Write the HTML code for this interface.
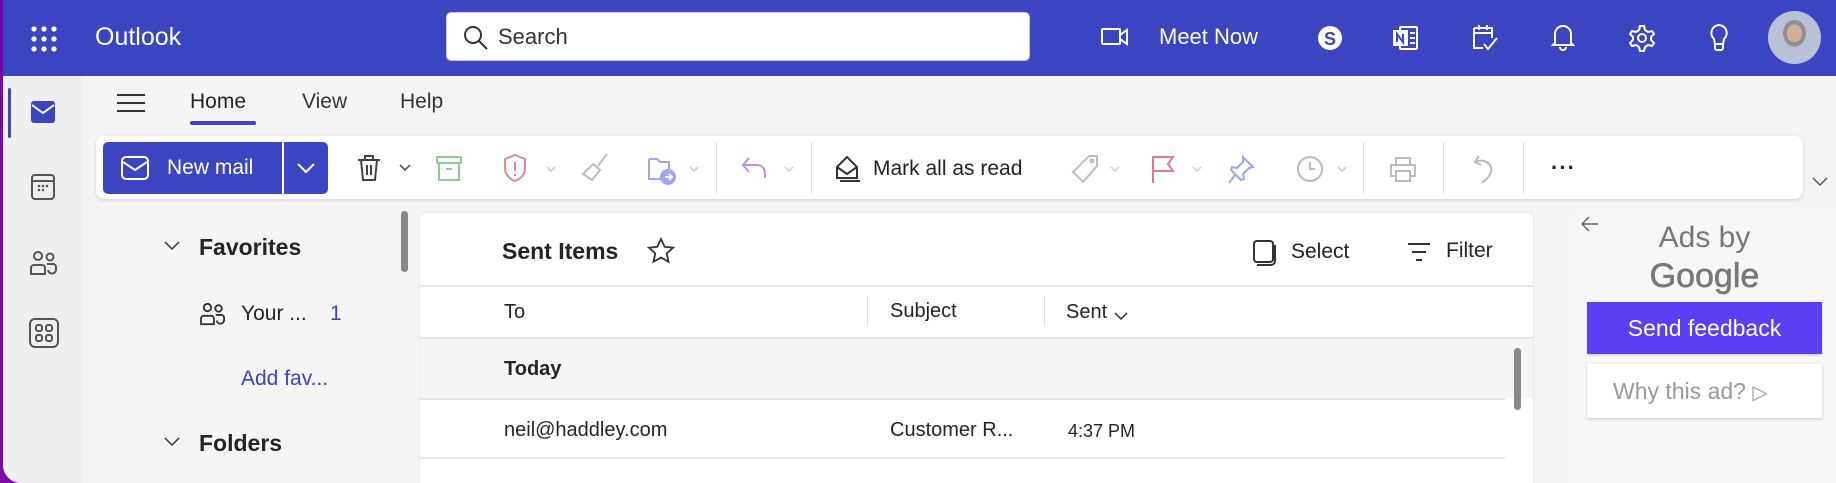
<!DOCTYPE html>
<html><head><meta charset="utf-8"><style>
*{margin:0;padding:0;box-sizing:border-box}
body{width:1836px;height:483px;overflow:hidden;background:#7a0aa8;font-family:"Liberation Sans",sans-serif;position:relative}
.a{position:absolute}
#win{position:absolute;left:3px;top:0;right:0;bottom:0;background:#f5f5f5;border-bottom-left-radius:18px;overflow:hidden}
#hdr{position:absolute;left:0;top:0;width:100%;height:76px;background:#3b44c1}
.w{color:#fff}
svg{display:block}
.t{color:#242424}
.ic{position:absolute}
</style></head><body>
<div id="win">
<div id="hdr">
 <svg class="ic" style="left:28px;top:26px" width="26" height="26" viewBox="0 0 26 26" fill="#fff"><circle cx="3" cy="3" r="2.6"/><circle cx="13" cy="3" r="2.6"/><circle cx="23" cy="3" r="2.6"/><circle cx="3" cy="13" r="2.6"/><circle cx="13" cy="13" r="2.6"/><circle cx="23" cy="13" r="2.6"/><circle cx="3" cy="23" r="2.6"/><circle cx="13" cy="23" r="2.6"/><circle cx="23" cy="23" r="2.6"/></svg>
 <div class="a w" style="left:92px;top:23px;font-size:25px">Outlook</div>
 <div class="a" style="left:443px;top:12px;width:584px;height:49px;background:#fff;border-radius:5px;border:1px solid #c8c8d8"></div>
 <svg class="ic" style="left:460px;top:25px" width="26" height="26" viewBox="0 0 26 26" fill="none" stroke="#333" stroke-width="2"><circle cx="10" cy="10" r="8"/><path d="M16 16l8 8"/></svg>
 <div class="a" style="left:495px;top:24px;font-size:22px;color:#333">Search</div>
 <svg class="ic" style="left:1098px;top:26px" width="28" height="22" viewBox="0 0 28 22" fill="none" stroke="#fff" stroke-width="2"><rect x="1" y="3" width="18" height="15" rx="1"/><path d="M19 9l7-5v14l-7-5"/></svg>
 <div class="a w" style="left:1156px;top:24px;font-size:22px">Meet Now</div>
 <svg class="ic" style="left:1314px;top:24px" width="26" height="28" viewBox="0 0 26 28"><circle cx="13" cy="14" r="12" fill="#fff"/><text x="13" y="21" text-anchor="middle" font-family="Liberation Sans" font-weight="bold" font-size="18" fill="#3b44c1">S</text></svg>
 <svg class="ic" style="left:1390px;top:25px" width="26" height="26" viewBox="0 0 26 26" fill="none" stroke="#fff" stroke-width="2"><rect x="7" y="2" width="17" height="22" rx="1"/><rect x="1" y="6" width="13" height="14" fill="#fff"/><path d="M4 17V9l6 8V9" stroke="#3b44c1"/><path d="M17 8h5M17 13h5M17 18h5"/></svg>
 <svg class="ic" style="left:1468px;top:23px" width="28" height="30" viewBox="0 0 28 30" fill="none" stroke="#fff" stroke-width="2"><path d="M3 5h18v10M3 5v20h9M3 10h18M8 2v5M16 2v5M13 21l4 5 9-11"/></svg>
 <svg class="ic" style="left:1548px;top:22px" width="24" height="30" viewBox="0 0 24 30" fill="none" stroke="#fff" stroke-width="2"><path d="M4 21V12a8 8 0 0116 0v9l2 2H2z"/><path d="M9 25a3 3 0 006 0"/></svg>
 <svg class="ic" style="left:1625px;top:24px" width="28" height="28" viewBox="0 0 28 28" fill="none" stroke="#fff" stroke-width="2"><circle cx="14" cy="14" r="4"/><path d="M12 2h4l1 4 3 2 4-1 2 3-3 3v3l3 3-2 3-4-1-3 2-1 4h-4l-1-4-3-2-4 1-2-3 3-3v-3l-3-3 2-3 4 1 3-2z"/></svg>
 <svg class="ic" style="left:1705px;top:23px" width="22" height="30" viewBox="0 0 22 30" fill="none" stroke="#fff" stroke-width="2"><path d="M11 2a8 8 0 00-5 14l1 5h8l1-5a8 8 0 00-5-14zM7 21v4a2 2 0 002 2h4a2 2 0 002-2v-4"/></svg>
 <div class="a" style="left:1765px;top:11px;width:53px;height:53px;border-radius:50%;background:radial-gradient(ellipse at 50% 42%,#d4ad98 0 20%,#8f8f8f 21% 30%,#b9c0d6 31% 100%)"></div>
</div>
<!-- rail -->
<div class="a" style="left:0;top:76px;width:79px;bottom:0;background:#efefef"></div>
<div class="a" style="left:5px;top:88px;width:3px;height:50px;background:#3b44c1;border-radius:2px"></div>
<svg class="ic" style="left:27px;top:100px" width="26" height="24" viewBox="0 0 26 24"><rect x="1" y="1" width="24" height="22" rx="3" fill="#3b44c1"/><path d="M2 5l11 8 11-8" fill="none" stroke="#fff" stroke-width="2"/></svg>
<svg class="ic" style="left:28px;top:174px" width="24" height="26" viewBox="0 0 24 26" fill="none" stroke="#555" stroke-width="2"><rect x="1" y="1" width="22" height="24" rx="3"/><path d="M1 7h22"/><g fill="#555" stroke="none"><circle cx="8" cy="12" r="1.3"/><circle cx="12" cy="12" r="1.3"/><circle cx="16" cy="12" r="1.3"/><circle cx="8" cy="16" r="1.3"/><circle cx="12" cy="16" r="1.3"/></g></svg>
<svg class="ic" style="left:27px;top:250px" width="28" height="26" viewBox="0 0 28 26" fill="none" stroke="#555" stroke-width="2"><circle cx="8" cy="6" r="4"/><circle cx="20" cy="7" r="3.5"/><path d="M1 24v-6a3 3 0 013-3h8a3 3 0 013 3v6H1zM17 14h6a3 3 0 013 3v2a4 4 0 01-8 1"/></svg>
<svg class="ic" style="left:26px;top:318px" width="30" height="30" viewBox="0 0 30 30" fill="none" stroke="#555" stroke-width="2"><rect x="1" y="1" width="28" height="28" rx="5"/><rect x="7" y="7" width="6" height="6" rx="2"/><rect x="17" y="7" width="6" height="6" rx="2"/><rect x="7" y="17" width="6" height="6" rx="2"/><rect x="17" y="17" width="6" height="6" rx="2"/></svg>
<!-- tabs -->
<svg class="ic" style="left:114px;top:93px" width="28" height="20" viewBox="0 0 28 20" stroke="#333" stroke-width="2"><path d="M0 2h28M0 10h28M0 18h28"/></svg>
<div class="a t" style="left:187px;top:90px;font-size:21px">Home</div>
<div class="a" style="left:187px;top:121px;width:66px;height:4px;background:#3b44c1;border-radius:2px"></div>
<div class="a t" style="left:299px;top:90px;font-size:21px;color:#333">View</div>
<div class="a t" style="left:397px;top:90px;font-size:21px;color:#333">Help</div>
<!-- toolbar -->
<div class="a" style="left:93px;top:136px;width:1707px;height:63px;background:#fff;border-radius:8px;box-shadow:0 1px 3px rgba(0,0,0,.15)"></div>
<div class="a" style="left:100px;top:142px;width:225px;height:52px;background:#3b44c1;border-radius:5px"></div>
<div class="a" style="left:279px;top:142px;width:2px;height:52px;background:#fff"></div>
<svg class="ic" style="left:118px;top:156px" width="28" height="24" viewBox="0 0 28 24" fill="none" stroke="#fff" stroke-width="2"><rect x="1" y="1" width="26" height="22" rx="4"/><path d="M2 6l12 8 12-8"/></svg>
<div class="a w" style="left:164px;top:156px;font-size:21px">New mail</div>
<svg class="ic" style="left:294px;top:163px" width="18" height="10" viewBox="0 0 18 10" fill="none" stroke="#fff" stroke-width="2"><path d="M1 1l8 8 8-8"/></svg>
<svg class="ic" style="left:354px;top:154px" width="24" height="28" viewBox="0 0 24 28" fill="none" stroke="#444" stroke-width="2"><path d="M1 6h22M8 6V2h8v4M4 6l2 20h12l2-20M10 11v10M14 11v10"/></svg>
<svg class="ic" style="left:396px;top:164px" width="12" height="8" viewBox="0 0 12 8" fill="none" stroke="#444" stroke-width="1.5"><path d="M1 1l5 5 5-5"/></svg>
<svg class="ic" style="left:433px;top:156px" width="26" height="25" viewBox="0 0 26 25" fill="none" stroke="#8bcb8b" stroke-width="2"><rect x="1" y="1" width="24" height="6" rx="1"/><path d="M3 7v17h20V7M10 13h6"/></svg>
<svg class="ic" style="left:500px;top:154px" width="24" height="28" viewBox="0 0 24 28" fill="none" stroke="#e08a8a" stroke-width="2"><path d="M12 1l10 4v9c0 7-5 11-10 13C7 25 2 21 2 14V5z"/><path d="M12 8v9M12 20v2"/></svg>
<svg class="ic" style="left:543px;top:166px" width="10" height="6" viewBox="0 0 10 6" fill="none" stroke="#ccc" stroke-width="1.5"><path d="M1 1l4 4 4-4"/></svg>
<svg class="ic" style="left:578px;top:152px" width="28" height="30" viewBox="0 0 28 30" fill="none" stroke="#bbb" stroke-width="2"><path d="M26 2l-9 12M12 12l7 6-8 10-9-6z"/></svg>
<svg class="ic" style="left:644px;top:155px" width="30" height="30" viewBox="0 0 30 30" fill="none" stroke="#9ea6ee" stroke-width="2"><path d="M2 4h8l3 3h9v7M2 4v20h12"/><circle cx="21" cy="22" r="7" fill="#9ea6ee"/><path d="M18 22h6M22 19l3 3-3 3" stroke="#fff"/></svg>
<svg class="ic" style="left:686px;top:166px" width="10" height="6" viewBox="0 0 10 6" fill="none" stroke="#ccc" stroke-width="1.5"><path d="M1 1l4 4 4-4"/></svg>
<div class="a" style="left:713px;top:142px;width:1px;height:52px;background:#ddd"></div>
<svg class="ic" style="left:738px;top:156px" width="28" height="24" viewBox="0 0 28 24" fill="none" stroke="#c88ae0" stroke-width="2"><path d="M8 2L2 9l6 7M2 9h14a8 8 0 018 8v5"/></svg>
<svg class="ic" style="left:781px;top:166px" width="10" height="6" viewBox="0 0 10 6" fill="none" stroke="#ccc" stroke-width="1.5"><path d="M1 1l4 4 4-4"/></svg>
<div class="a" style="left:808px;top:142px;width:1px;height:52px;background:#ddd"></div>
<svg class="ic" style="left:832px;top:155px" width="28" height="28" viewBox="0 0 28 28" fill="none" stroke="#333" stroke-width="2"><path d="M2 12L12 2l10 10v11H2zM2 12l10 7 10-7M5 26h20"/></svg>
<div class="a t" style="left:870px;top:157px;font-size:21px">Mark all as read</div>
<svg class="ic" style="left:1068px;top:154px" width="28" height="30" viewBox="0 0 28 30" fill="none" stroke="#bbb" stroke-width="2"><path d="M18 2h8v10L12 28 2 18z"/><circle cx="21" cy="7" r="1.5"/></svg>
<svg class="ic" style="left:1107px;top:166px" width="10" height="6" viewBox="0 0 10 6" fill="none" stroke="#ccc" stroke-width="1.5"><path d="M1 1l4 4 4-4"/></svg>
<svg class="ic" style="left:1148px;top:154px" width="24" height="30" viewBox="0 0 24 30" fill="none" stroke="#e07a8a" stroke-width="2"><path d="M2 29V3h20l-5 7 5 7H2"/></svg>
<svg class="ic" style="left:1189px;top:166px" width="10" height="6" viewBox="0 0 10 6" fill="none" stroke="#ccc" stroke-width="1.5"><path d="M1 1l4 4 4-4"/></svg>
<svg class="ic" style="left:1224px;top:155px" width="28" height="30" viewBox="0 0 28 30" fill="none" stroke="#9ea6ee" stroke-width="2"><path d="M16 2l10 10-4 1-6 6 1 5-3 1-10-10 1-3 5 1 6-6zM8 20l-6 8"/></svg>
<svg class="ic" style="left:1293px;top:155px" width="28" height="28" viewBox="0 0 28 28" fill="none" stroke="#bbb" stroke-width="2"><circle cx="14" cy="14" r="12"/><path d="M14 7v7h5"/></svg>
<svg class="ic" style="left:1334px;top:166px" width="10" height="6" viewBox="0 0 10 6" fill="none" stroke="#ccc" stroke-width="1.5"><path d="M1 1l4 4 4-4"/></svg>
<div class="a" style="left:1360px;top:142px;width:1px;height:52px;background:#ddd"></div>
<svg class="ic" style="left:1386px;top:156px" width="28" height="26" viewBox="0 0 28 26" fill="none" stroke="#bbb" stroke-width="2"><path d="M7 8V2h14v6M7 20H2V9h24v11h-5M7 15h14v10H7z"/></svg>
<div class="a" style="left:1440px;top:142px;width:1px;height:52px;background:#ddd"></div>
<svg class="ic" style="left:1470px;top:154px" width="22" height="30" viewBox="0 0 22 30" fill="none" stroke="#bbb" stroke-width="2"><path d="M6 2L2 8l6 3M2 8c9-4 18 2 16 10-1 4-5 8-9 11"/></svg>
<div class="a" style="left:1520px;top:142px;width:1px;height:52px;background:#ddd"></div>
<div class="a t" style="left:1548px;top:155px;font-size:22px;font-weight:bold;letter-spacing:1px">···</div>
<svg class="ic" style="left:1809px;top:177px" width="16" height="10" viewBox="0 0 16 10" fill="none" stroke="#555" stroke-width="1.5"><path d="M1 1l7 7 7-7"/></svg>
<!-- folder pane -->
<div class="a" style="left:398px;top:211px;width:7px;height:61px;background:#888;border-radius:4px"></div>
<svg class="ic" style="left:161px;top:241px" width="16" height="10" viewBox="0 0 16 10" fill="none" stroke="#333" stroke-width="1.5"><path d="M1 1l7 7 7-7"/></svg>
<div class="a t" style="left:196px;top:234px;font-size:23px;font-weight:bold">Favorites</div>
<svg class="ic" style="left:197px;top:302px" width="26" height="24" viewBox="0 0 28 26" fill="none" stroke="#333" stroke-width="2"><circle cx="8" cy="6" r="4"/><circle cx="20" cy="7" r="3.5"/><path d="M1 24v-6a3 3 0 013-3h8a3 3 0 013 3v6H1zM17 14h6a3 3 0 013 3v2a4 4 0 01-8 1"/></svg>
<div class="a t" style="left:238px;top:302px;font-size:21px">Your ...</div>
<div class="a" style="left:327px;top:302px;font-size:21px;color:#3b44c1">1</div>
<div class="a" style="left:238px;top:367px;font-size:21px;color:#3b44c1">Add fav...</div>
<svg class="ic" style="left:161px;top:437px" width="16" height="10" viewBox="0 0 16 10" fill="none" stroke="#333" stroke-width="1.5"><path d="M1 1l7 7 7-7"/></svg>
<div class="a t" style="left:196px;top:430px;font-size:23px;font-weight:bold">Folders</div>
<!-- message list -->
<div class="a" style="left:417px;top:213px;width:1113px;height:290px;background:#fff;border-radius:6px;box-shadow:0 0 2px rgba(0,0,0,.12)"></div>
<div class="a t" style="left:499px;top:238px;font-size:23px;font-weight:bold">Sent Items</div>
<svg class="ic" style="left:644px;top:237px" width="28" height="27" viewBox="0 0 28 27" fill="none" stroke="#333" stroke-width="1.8"><path d="M14 2l3.6 7.8 8.4.9-6.3 5.7 1.8 8.3L14 20.5 6.5 24.7l1.8-8.3L2 10.7l8.4-.9z"/></svg>
<svg class="ic" style="left:1250px;top:240px" width="24" height="26" viewBox="0 0 24 26" fill="none" stroke="#333" stroke-width="2"><rect x="1" y="1" width="19" height="21" rx="3"/><path d="M4 25h14a4 4 0 004-4V5"/></svg>
<div class="a t" style="left:1288px;top:240px;font-size:21px">Select</div>
<svg class="ic" style="left:1404px;top:242px" width="24" height="20" viewBox="0 0 24 20" stroke="#333" stroke-width="2"><path d="M1 2h22M5 10h14M9 18h6"/></svg>
<div class="a t" style="left:1443px;top:239px;font-size:21px">Filter</div>
<div class="a" style="left:417px;top:285px;width:1113px;height:2px;background:#e6e6e6"></div>
<div class="a t" style="left:501px;top:301px;font-size:20px">To</div>
<div class="a" style="left:864px;top:296px;width:1px;height:30px;background:#ddd"></div>
<div class="a t" style="left:887px;top:300px;font-size:20px">Subject</div>
<div class="a" style="left:1041px;top:296px;width:1px;height:30px;background:#ddd"></div>
<div class="a t" style="left:1063px;top:301px;font-size:20px">Sent</div>
<svg class="ic" style="left:1111px;top:312px" width="14" height="8" viewBox="0 0 14 8" fill="none" stroke="#333" stroke-width="1.5"><path d="M1 1l6 6 6-6"/></svg>
<div class="a" style="left:417px;top:337px;width:1113px;height:2px;background:#e6e6e6"></div>
<div class="a" style="left:417px;top:339px;width:1113px;height:59px;background:#f5f5f5"></div>
<div class="a t" style="left:501px;top:358px;font-size:20px;font-weight:bold">Today</div>
<div class="a" style="left:417px;top:398px;width:1085px;height:2px;background:#e6e6e6"></div>
<div class="a t" style="left:501px;top:419px;font-size:20px">neil@haddley.com</div>
<div class="a t" style="left:887px;top:419px;font-size:20px">Customer R...</div>
<div class="a t" style="left:1065px;top:421px;font-size:18px">4:37 PM</div>
<div class="a" style="left:417px;top:457px;width:1085px;height:2px;background:#e6e6e6"></div>
<div class="a" style="left:1511px;top:348px;width:7px;height:62px;background:#888;border-radius:4px"></div>
<!-- ads -->
<div class="a" style="left:1570px;top:209px;width:263px;height:274px;background:#f7f7f7"></div>
<svg class="ic" style="left:1578px;top:216px" width="18" height="16" viewBox="0 0 18 16" fill="none" stroke="#666" stroke-width="1.5"><path d="M8 1L1 8l7 7M1 8h16"/></svg>
<div class="a" style="left:1570px;top:219px;width:263px;text-align:center;font-size:30px;color:#777;line-height:38px">Ads by<br><span style="font-size:34px;color:#777;-webkit-text-stroke:0.6px #777">Google</span></div>
<div class="a" style="left:1584px;top:302px;width:235px;height:52px;background:#5b3ff5;color:#fff;font-size:23px;text-align:center;line-height:52px;box-shadow:0 1px 2px rgba(0,0,0,.2)">Send feedback</div>
<div class="a" style="left:1584px;top:364px;width:235px;height:54px;background:#fff;color:#999;font-size:23px;line-height:54px;padding-left:26px;box-shadow:0 1px 3px rgba(0,0,0,.2)">Why this ad? <span style="font-size:20px">▷</span></div>
</div>
</body></html>
